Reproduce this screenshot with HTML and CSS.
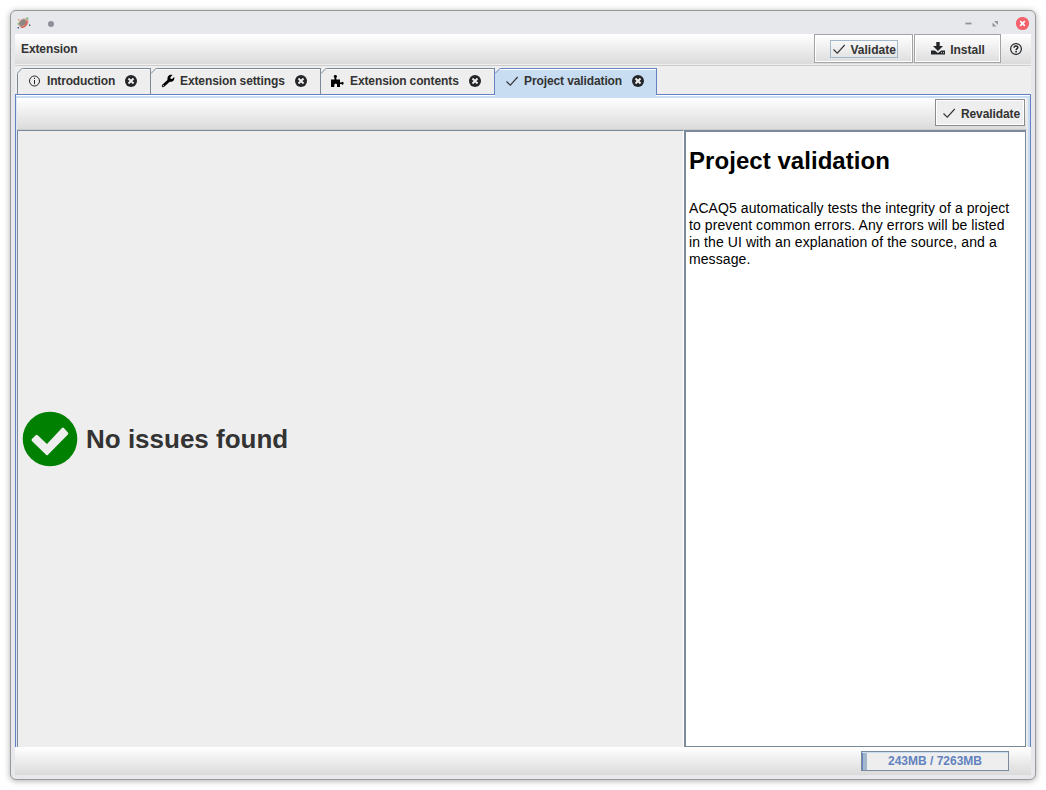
FILE: index.html
```html
<!DOCTYPE html>
<html lang="en">
<head>
<meta charset="utf-8">
<title>Extension</title>
<link rel="stylesheet" href="styles.css">
</head>
<body>
<svg class="defs" width="0" height="0">
  <symbol id="check" viewBox="0 0 14 14"><path d="M1.500 7.500 5.300 11.200 12.700 3" fill="none" stroke="#333" stroke-width="1.150"/></symbol>
  <symbol id="close" viewBox="0 0 12 12"><circle cx="6" cy="6" r="6" fill="#232629"/><path d="M4.200 4.200 7.800 7.800M7.800 4.200 4.200 7.800" stroke="#eee" stroke-width="2" stroke-linecap="square"/></symbol>
  <symbol id="corner" viewBox="0 0 6 6"><path d="M0 0H6L0 6Z" fill="#eee"/><path d="M0 5.500 5.500 0" fill="none" stroke="currentColor"/></symbol>
</svg>
<div class="window">
  <header class="titlebar">
    <svg class="app-icon" viewBox="0 0 14 14"><ellipse cx="6.500" cy="7" rx="5.500" ry="4.200" fill="#d9aea6" transform="rotate(-35 6.500 7)"/><ellipse cx="5.800" cy="6.700" rx="3.800" ry="2.800" fill="#8d8781" transform="rotate(-35 5.800 6.700)"/><path d="M4 11C7 12 10 9.500 10 4.500" fill="none" stroke="#d96459" stroke-width="1.400"/><path d="M1 3h1.500v1.500H1z" fill="#e79a58"/><path d="M9.500 1.500h1.700v1.700H9.500z" fill="#58b058"/><path d="M.5 11H2v1.500H.5z" fill="#445a9c"/><path d="M12 8.500h1.200v1.500H12z" fill="#3c5a4a"/><path d="M.5 7H2v1.500H.5z" fill="#7bbb65"/></svg>
    <span class="dot"></span>
    <span class="grow"></span>
    <svg class="win-buttons" width="68" height="14" viewBox="0 0 68 14"><path d="M3.500 6.500h6" stroke="#90939b" stroke-width="1.800"/><path d="M32 4h4v4ZM30.500 5.500v4h4Z" fill="#90939b"/><circle cx="60.500" cy="6.500" r="6.600" fill="#f4606c"/><path d="M58.200 4.200l4.600 4.600M62.800 4.200l-4.600 4.600" stroke="#fff" stroke-width="1.700"/></svg>
  </header>
  <div class="toolbar main-bar">
    <span class="menu">Extension</span>
    <span class="grow"></span>
    <button class="button validate"><span class="focus"><svg width="14" height="14"><use href="#check"/></svg><span class="caption">Validate</span></span></button>
    <button class="button install"><svg width="14" height="13" viewBox="0 0 14 13"><path d="M5.300 0h3.400v4H12L7 9 2 4h3.300Z" fill="#232629"/><path d="M0 8.500h3.700L7 11l3.300-2.500H14V12.500H0Z" fill="#232629"/><path d="M10 10.700h1M12 10.700h1" stroke="#ddd"/></svg><span class="caption">Install</span></button>
    <svg class="help" width="12" height="12" viewBox="0 0 12 12"><circle cx="6" cy="6" r="5.400" fill="none" stroke="#232629" stroke-width="1.200"/><path d="M4 4.700C4.100 2.300 8 2.500 7.800 4.600 7.700 5.600 6.100 5.600 6.100 7.200" fill="none" stroke="#232629" stroke-width="1.500"/><path d="M5.300 8h1.600v1.500H5.300z" fill="#232629"/></svg>
  </div>
  <nav class="tabs">
    <div class="tab t1"><svg class="corner"><use href="#corner"/></svg><svg class="icon" viewBox="0 0 14 14"><circle cx="7.500" cy="7" r="5" fill="none" stroke="#232629"/><path d="M7.500 6v4.200M7.500 3.800V5" stroke="#232629"/></svg><span class="label">Introduction</span><svg class="close"><use href="#close"/></svg></div>
    <div class="tab t2"><svg class="corner"><use href="#corner"/></svg><svg class="icon" viewBox="0 0 14 14"><path d="M2.200 11.800 8 6.500" stroke="#000" stroke-width="2.900" stroke-linecap="round"/><path d="M11.500 1 9.300 3.200 9.600 4.700 11 5 13.200 2.900C14 6 11.500 8.500 8.500 7.700L6.500 5.700C6 2.500 8.500 0.300 11.500 1Z"/><circle cx="2.300" cy="11.700" r=".6" fill="#eee"/></svg><span class="label">Extension settings</span><svg class="close"><use href="#close"/></svg></div>
    <div class="tab t3"><svg class="corner"><use href="#corner"/></svg><svg class="icon" viewBox="0 0 14 14"><path d="M1 5.500h3.500V4L3.700 2.500C3.700.5 7 .5 7 2.500L6.300 4v1.500H10V8.500h1.300l1-.8c1.800 0 1.800 3 0 3l-1-.8H10v3H7v-2C7 9.500 4.300 9.500 4.300 11v2H1Z"/></svg><span class="label">Extension contents</span><svg class="close"><use href="#close"/></svg></div>
    <div class="tab t4 active"><svg class="corner"><use href="#corner"/></svg><svg class="icon"><use href="#check"/></svg><span class="label">Project validation</span><svg class="close"><use href="#close"/></svg></div>
  </nav>
  <main class="pane">
    <div class="toolbar sub-bar">
      <button class="button revalidate"><svg width="14" height="14"><use href="#check"/></svg><span class="caption">Revalidate</span></button>
    </div>
    <div class="split">
      <section class="result">
        <svg width="56" height="56" viewBox="0 0 56 56"><circle cx="28" cy="28" r="27.300" fill="#008000"/><path d="M9.900 29.900Q9 28.900 9.900 27.900L13.700 24.200Q14.700 23.300 15.700 24.200L25 33 39.900 17Q40.900 16 41.900 17L45.900 21.500Q46.900 22.500 45.900 23.500L26 43.800Q25 44.800 24 43.800Z" fill="#eee"/></svg>
        <span class="status">No issues found</span>
      </section>
      <article class="docs">
        <h1>Project validation</h1>
        <p>ACAQ5 automatically tests the integrity of a project<br>to prevent common errors. Any errors will be listed<br>in the UI with an explanation of the source, and a<br>message.</p>
      </article>
    </div>
  </main>
  <footer class="toolbar statusbar"><div class="memory"><span>243MB / 7263MB</span></div></footer>
</div>
</body>
</html>
```
FILE: styles.css
```css
* { box-sizing: border-box; }
body { margin: 0; padding: 10px; background: #fff; font: bold 12px/14px "Liberation Sans", Arial, sans-serif; color: #333; }
svg { display: block; flex: none; }
.defs { position: absolute; }
.window { width: 1026px; height: 770px; display: flex; flex-direction: column; padding: 0 4px 4px; border: 1px solid #999; border-radius: 6px; background: #e7e8ec; box-shadow: 0 1px 6px rgba(0,0,0,.32); }
.grow { flex: 1; }
.titlebar { height: 23px; flex: none; display: flex; align-items: center; padding-left: 2px; }
.app-icon { width: 14px; height: 14px; margin-top: 1px; }
.dot { width: 6px; height: 6px; border-radius: 50%; background: #8d909d; margin: 2px 0 0 16.5px; }
.win-buttons { margin: 2px 1px 0 0; }
.toolbar { display: flex; background: linear-gradient(#fff, #dadada); }
.main-bar { height: 32px; flex: none; border-bottom: 1px solid #ccc; box-shadow: inset 0 -1px #eee; }
.menu { padding: 8px 0 0 6px; letter-spacing: -.1px; }
.button { display: flex; align-items: center; justify-content: center; font: inherit; color: inherit; border: 1px solid #a3a3a3; box-shadow: inset -1px -1px #fff, inset 1px 1px #fff; border-radius: 0; padding: 0; background: linear-gradient(#fff, #dedede); height: 29px; white-space: nowrap; }
.caption { padding-top: 2px; }
.validate { width: 99px; margin-right: 1px; }
.focus { display: flex; align-items: center; gap: 5px; width: 68px; height: 18px; border: 1px solid #a3b8cc; padding-left: 1px; }
.install { width: 87px; gap: 5px; padding-left: 1px; }
.help { margin: 9px 9px 0 9px; }
.tabs { height: 28px; flex: none; padding: 2px 0 0 2px; display: flex; background: #eee; }
.tab { position: relative; height: 26px; display: flex; align-items: center; border-top: 1px solid #7a8a99; border-right: 1px solid #7a8a99; color: #7a8a99; box-shadow: inset 0 1px #f8f8f8; background: #eee; padding: 0 0 2px 9px; }
.t1 { width: 134px; border-left: 1px solid #7a8a99; }
.t2 { width: 170px; padding-left: 10px; }
.t3 { width: 174px; border-right-color: #6382bf; }
.t4 { width: 162px; }
.active { padding-left: 10px; background: #c8ddf2; border-color: #6382bf; color: #6382bf; box-shadow: inset 0 1px #fff; z-index: 1; }
.active::after { content: ""; position: absolute; left: 0; right: 0; top: 25px; height: 3px; background: #c8ddf2; }
.corner { position: absolute; left: 0; top: -1px; width: 6px; height: 6px; }
.t1 .corner { left: -1px; }
.icon { width: 14px; height: 14px; margin-right: 5px; fill: #000; }
.t1 .icon, .t3 .icon { margin-right: 6px; }
.label { color: #333; white-space: nowrap; letter-spacing: -.11px; }
.t1 .label { width: 68px; letter-spacing: -.16px; }
.t2 .label { width: 105px; }
.t3 .label { width: 109px; }
.t4 .label { width: 98px; }
.close { width: 12px; height: 12px; margin-left: 10px; }
.pane { flex: 1; min-height: 0; display: flex; flex-direction: column; border: solid #6382bf; border-width: 1px 1px 0; box-shadow: inset 0 1px #fff, inset -2px 0 #c8ddf2, inset 0 3px #c8ddf2, inset 1px 0 #dbe8f5; padding: 3px 3px 0 1px; }
.sub-bar { height: 32px; flex: none; justify-content: flex-end; padding: 1px 2px 0 0; box-shadow: inset 0 -1px #ccc, inset -1px 0 #eee; }
.revalidate { width: 90px; height: 27px; gap: 5px; padding-left: 2px; letter-spacing: -.08px; border-color: #8c8c8c; background: #eee; }
.split { flex: 1; display: flex; background: #eee; padding-right: 1px; }
.result { width: 667px; border-left: 1px solid #7a8a99; border-top: 1px solid #7a8a99; display: flex; align-items: center; gap: 8px; padding-left: 4px; border-right: 1px solid #fff; }
.status { font-size: 26px; line-height: 30px; }
.docs { flex: 1; background: #fff; border: 1px solid #7a8a99; border-width: 2px 1px 1px 2px; padding: 0 3px; color: #000; }
h1 { font-size: 24px; line-height: 28px; margin: 15px 0 25px; letter-spacing: .05px; }
p { margin: 0; font-weight: normal; font-size: 14px; line-height: 17px; letter-spacing: .085px; white-space: nowrap; }
.statusbar { height: 28px; flex: none; justify-content: flex-end; padding: 4px 22px 0 0; }
.memory { width: 148px; height: 20px; border: 1px solid #7a8a99; color: #6382bf; text-align: center; line-height: 18px; background: linear-gradient(90deg, #6382bf 1px, #a3b8cc 1px, #a3b8cc 5px, #eee 5px); box-shadow: inset 0 1px #c8ddf2; }
```
